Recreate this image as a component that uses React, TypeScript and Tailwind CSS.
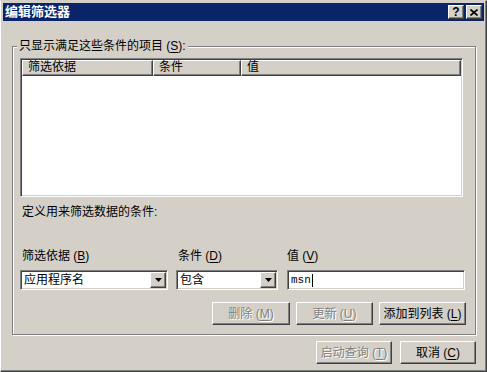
import React from "react";

const raised =
  "border border-t-white border-l-white border-r-[#404040] border-b-[#404040] shadow-[inset_-1px_-1px_0_#808080]";
const sunken =
  "border border-t-[#808080] border-l-[#808080] border-r-white border-b-white shadow-[inset_1px_1px_0_#404040,inset_-1px_-1px_0_#d4d0c8]";

function Key({ c }: { c: string }) {
  return <span className="underline underline-offset-[2px]">{c}</span>;
}

function Button({
  children,
  width,
  disabled,
}: {
  children: React.ReactNode;
  width: string;
  disabled?: boolean;
}) {
  return (
    <button
      className={`${raised} ${width} flex h-[23px] shrink-0 items-center justify-center bg-[#d4d0c8] ${
        disabled ? "text-[#808080] [text-shadow:1px_1px_0_#fff]" : "text-black"
      }`}
    >
      {children}
    </button>
  );
}

function Combo({ value, width }: { value: string; width: string }) {
  return (
    <div className={`${sunken} ${width} flex h-[20px] items-center bg-white p-[1px]`}>
      <span className="flex-1 pl-[2px]">{value}</span>
      <div className={`${raised} flex h-[16px] w-[16px] items-center justify-center bg-[#d4d0c8]`}>
        <svg width="7" height="4" viewBox="0 0 7 4">
          <path d="M0 0h7L3.5 4z" fill="#000" />
        </svg>
      </div>
    </div>
  );
}

export default function App() {
  return (
    <div className="h-[372px] w-[487px] overflow-hidden border border-t-[#d4d0c8] border-l-white border-r-[#404040] border-b-[#404040] bg-[#d4d0c8] p-[2px] font-['Liberation_Sans','Noto_Sans_CJK_SC',sans-serif] text-[12px] leading-[14px] text-black shadow-[inset_-1px_-1px_0_#808080]">
      {/* title bar */}
      <div className="flex h-[18px] items-center bg-[#0a246a] pl-[2px] pr-[2px]">
        <span className="text-[13px] font-bold text-white">编辑筛选器</span>
        <div className="ml-auto flex gap-[2px]">
          <div className={`${raised} flex h-[14px] w-[16px] items-center justify-center bg-[#d4d0c8] text-[12px] font-bold leading-none`}>
            ?
          </div>
          <div className={`${raised} flex h-[14px] w-[16px] items-center justify-center bg-[#d4d0c8]`}>
            <svg width="8" height="7" viewBox="0 0 8 7">
              <path d="M0.5 0.5L7.5 6.5M7.5 0.5L0.5 6.5" stroke="#000" strokeWidth="1.6" />
            </svg>
          </div>
        </div>
      </div>

      <fieldset className="ml-[9px] mr-[8px] mt-[18px] border border-[#808080] shadow-[inset_1px_1px_0_#fff,1px_1px_0_#fff]">
        <legend className="ml-[4px] bg-[#d4d0c8] px-[2px] leading-[14px]">
          只显示满足这些条件的项目 (<Key c="S" />):
        </legend>
        <div className="pb-[9px] pl-[7px] pt-[5px]">
          {/* list view */}
          <div className={`${sunken} h-[139px] w-[443px] bg-white p-[1px]`}>
            <div className="flex h-[16px]">
              <div className={`${raised} w-[131px] bg-[#d4d0c8] pl-[5px] leading-[13px]`}>筛选依据</div>
              <div className={`${raised} w-[88px] bg-[#d4d0c8] pl-[5px] leading-[13px]`}>条件</div>
              <div className={`${raised} flex-1 bg-[#d4d0c8] pl-[5px] leading-[13px]`}>值</div>
            </div>
          </div>

          <div className="mt-[8px] pl-[2px]">定义用来筛选数据的条件:</div>

          <div className="mt-[30px] flex">
            <div className="w-[148px]">
              <div className="pl-[2px]">
                筛选依据 (<Key c="B" />)
              </div>
              <div className="mt-[7px]">
                <Combo value="应用程序名" width="w-[148px]" />
              </div>
            </div>
            <div className="ml-[8px] w-[102px]">
              <div className="pl-[2px]">
                条件 (<Key c="D" />)
              </div>
              <div className="mt-[7px]">
                <Combo value="包含" width="w-[102px]" />
              </div>
            </div>
            <div className="ml-[9px] w-[178px]">
              <div>
                值 (<Key c="V" />)
              </div>
              <div className={`${sunken} mt-[7px] flex h-[20px] items-center bg-white pl-[3px]`}>
                <span className="font-['Liberation_Mono',monospace] text-[11px]">msn</span>
                <span className="ml-[1px] h-[13px] w-[1px] bg-black" />
              </div>
            </div>
          </div>

          <div className="mt-[12px] flex gap-[6px] pl-[192px]">
            <Button width="w-[78px]" disabled>
              删除 (<Key c="M" />)
            </Button>
            <Button width="w-[77px]" disabled>
              更新 (<Key c="U" />)
            </Button>
            <Button width="w-[87px]">
              添加到列表 (<Key c="L" />)
            </Button>
          </div>
        </div>
      </fieldset>

      <div className="mt-[6px] flex justify-end gap-[8px] pr-[8px]">
        <Button width="w-[76px]" disabled>
          启动查询 (<Key c="T" />)
        </Button>
        <Button width="w-[76px]">
          取消 (<Key c="C" />)
        </Button>
      </div>
    </div>
  );
}
